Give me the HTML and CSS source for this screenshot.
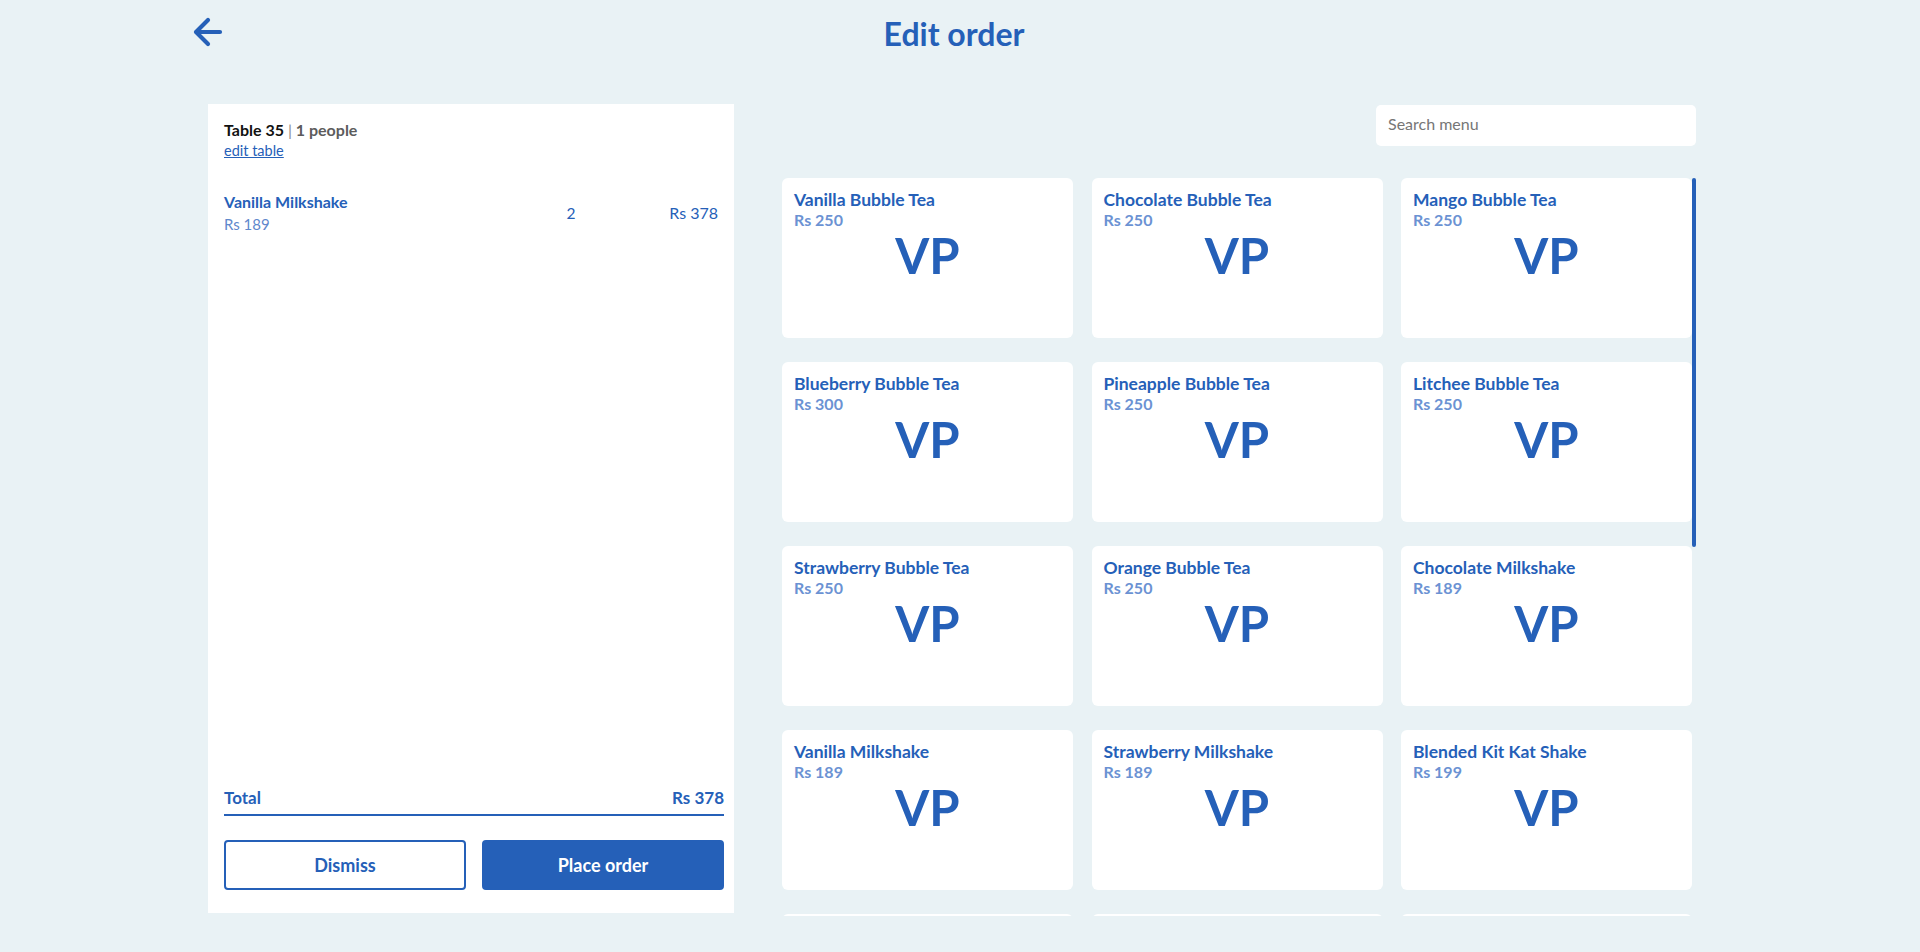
FILE: index.html
```html
<!DOCTYPE html>
<html lang="en">
<head>
<meta charset="utf-8">
<title>Edit order</title>
<link rel="stylesheet" href="styles.css">
</head>
<body>
<header class="topbar">
  <a class="back" href="#" aria-label="Back">
    <svg width="30" height="30" viewBox="0 0 30 30" fill="none" stroke="currentColor" stroke-width="4.2" stroke-linecap="round" stroke-linejoin="round">
      <path d="M27 15H3.5"/>
      <path d="M15 3L3 15l12 12"/>
    </svg>
  </a>
  <h1 class="title">Edit order</h1>
  <div class="spacer"></div>
</header>

<main class="main">
  <section class="order-panel">
    <div class="order-head">
      <div class="table-line"><span class="table-name">Table 35</span> <span class="sep">|</span> <span class="people">1 people</span></div>
      <a class="edit-link" href="#">edit table</a>
    </div>
    <div class="order-items">
      <div class="order-item">
        <div class="item-info">
          <div class="item-name">Vanilla Milkshake</div>
          <div class="item-unit">Rs 189</div>
        </div>
        <div class="item-qty">2</div>
        <div class="item-total">Rs 378</div>
      </div>
    </div>
    <div class="order-total">
      <span>Total</span>
      <span>Rs 378</span>
    </div>
    <div class="actions">
      <button class="btn btn-outline">Dismiss</button>
      <button class="btn btn-solid">Place order</button>
    </div>
  </section>

  <section class="menu">
    <input class="search" type="text" placeholder="Search menu">
    <div class="menu-body">
      <div class="menu-viewport">
        <div class="menu-grid">
          <div class="card"><div class="card-name">Vanilla Bubble Tea</div><div class="card-price">Rs 250</div><div class="card-logo">VP</div></div>
          <div class="card"><div class="card-name">Chocolate Bubble Tea</div><div class="card-price">Rs 250</div><div class="card-logo">VP</div></div>
          <div class="card"><div class="card-name">Mango Bubble Tea</div><div class="card-price">Rs 250</div><div class="card-logo">VP</div></div>
          <div class="card"><div class="card-name">Blueberry Bubble Tea</div><div class="card-price">Rs 300</div><div class="card-logo">VP</div></div>
          <div class="card"><div class="card-name">Pineapple Bubble Tea</div><div class="card-price">Rs 250</div><div class="card-logo">VP</div></div>
          <div class="card"><div class="card-name">Litchee Bubble Tea</div><div class="card-price">Rs 250</div><div class="card-logo">VP</div></div>
          <div class="card"><div class="card-name">Strawberry Bubble Tea</div><div class="card-price">Rs 250</div><div class="card-logo">VP</div></div>
          <div class="card"><div class="card-name">Orange Bubble Tea</div><div class="card-price">Rs 250</div><div class="card-logo">VP</div></div>
          <div class="card"><div class="card-name">Chocolate Milkshake</div><div class="card-price">Rs 189</div><div class="card-logo">VP</div></div>
          <div class="card"><div class="card-name">Vanilla Milkshake</div><div class="card-price">Rs 189</div><div class="card-logo">VP</div></div>
          <div class="card"><div class="card-name">Strawberry Milkshake</div><div class="card-price">Rs 189</div><div class="card-logo">VP</div></div>
          <div class="card"><div class="card-name">Blended Kit Kat Shake</div><div class="card-price">Rs 199</div><div class="card-logo">VP</div></div>
          <div class="card"><div class="card-name">Blended Oreo Shake</div><div class="card-price">Rs 199</div><div class="card-logo">VP</div></div>
          <div class="card"><div class="card-name">Cold Coffee</div><div class="card-price">Rs 149</div><div class="card-logo">VP</div></div>
          <div class="card"><div class="card-name">Iced Latte</div><div class="card-price">Rs 179</div><div class="card-logo">VP</div></div>
          <div class="card"><div class="card-name">Lemon Iced Tea</div><div class="card-price">Rs 129</div><div class="card-logo">VP</div></div>
          <div class="card"><div class="card-name">Peach Iced Tea</div><div class="card-price">Rs 129</div><div class="card-logo">VP</div></div>
          <div class="card"><div class="card-name">Virgin Mojito</div><div class="card-price">Rs 159</div><div class="card-logo">VP</div></div>
          <div class="card"><div class="card-name">Blue Lagoon</div><div class="card-price">Rs 159</div><div class="card-logo">VP</div></div>
          <div class="card"><div class="card-name">Watermelon Cooler</div><div class="card-price">Rs 149</div><div class="card-logo">VP</div></div>
          <div class="card"><div class="card-name">French Fries</div><div class="card-price">Rs 119</div><div class="card-logo">VP</div></div>
          <div class="card"><div class="card-name">Peri Peri Fries</div><div class="card-price">Rs 139</div><div class="card-logo">VP</div></div>
          <div class="card"><div class="card-name">Veg Sandwich</div><div class="card-price">Rs 149</div><div class="card-logo">VP</div></div>
          <div class="card"><div class="card-name">Paneer Sandwich</div><div class="card-price">Rs 179</div><div class="card-logo">VP</div></div>
        </div>
      </div>
      <div class="scrollbar"><div class="thumb"></div></div>
    </div>
  </section>
</main>
</body>
</html>
```

FILE: styles.css
```css
* {
  box-sizing: border-box;
}

html, body {
  margin: 0;
  padding: 0;
}

body {
  background: #e9f2f5;
  font-family: Lato, "Liberation Sans", sans-serif;
  color: #2560b8;
  height: 952px;
  overflow: hidden;
}

.topbar {
  display: grid;
  grid-template-columns: 1fr auto 1fr;
  align-items: start;
  width: 1522px;
  height: 104px;
  margin-left: 193px;
}

.back {
  display: block;
  width: 30px;
  height: 30px;
  margin-top: 17px;
  color: #2560b8;
}

.back svg {
  display: block;
}

.title {
  margin: 0;
  padding-top: 15px;
  font-size: 32px;
  line-height: 38px;
  font-weight: 700;
  color: #2560b8;
}

.main {
  display: flex;
  gap: 48px;
  padding-left: 208px;
}

.order-panel {
  display: flex;
  flex-direction: column;
  width: 526px;
  height: 809px;
  background: #ffffff;
  padding: 16px 10px 23px 16px;
}

.order-head {
  display: flex;
  flex-direction: column;
  align-items: flex-start;
}

.table-line {
  font-size: 16px;
  font-weight: 700;
  line-height: 19px;
}

.table-name {
  color: #111111;
}

.sep {
  color: #8a8a8a;
  font-weight: 400;
}

.people {
  color: #5c5c5c;
}

.edit-link {
  margin-top: 3px;
  font-size: 14.5px;
  line-height: 17px;
  color: #2560b8;
  text-decoration: underline;
}

.order-items {
  flex: 1;
  margin-top: 33px;
  padding-right: 6px;
}

.order-item {
  display: grid;
  grid-template-columns: 1fr 54px 120px;
  align-items: center;
}

.item-name {
  font-size: 16px;
  font-weight: 700;
  line-height: 20px;
  color: #2560b8;
}

.item-unit {
  margin-top: 3px;
  font-size: 15px;
  line-height: 18px;
  color: #5f88cc;
}

.item-qty {
  font-size: 15.5px;
  text-align: center;
  color: #2560b8;
}

.item-total {
  font-size: 16px;
  text-align: right;
  color: #2560b8;
}

.order-total {
  display: flex;
  justify-content: space-between;
  font-size: 17px;
  font-weight: 700;
  line-height: 20px;
  padding-bottom: 6px;
  border-bottom: 2px solid #2560b8;
  color: #2560b8;
}

.actions {
  display: grid;
  grid-template-columns: 1fr 1fr;
  gap: 16px;
  margin-top: 24px;
}

.btn {
  height: 50px;
  border-radius: 4px;
  font-family: Lato, "Liberation Sans", sans-serif;
  font-size: 18px;
  font-weight: 700;
  cursor: pointer;
}

.btn-outline {
  background: #ffffff;
  border: 2px solid #2560b8;
  color: #2560b8;
}

.btn-solid {
  background: #2560b8;
  border: 2px solid #2560b8;
  color: #ffffff;
}

.menu {
  display: flex;
  flex-direction: column;
  width: 914px;
}

.search {
  align-self: flex-end;
  width: 320px;
  height: 41px;
  margin-top: 1px;
  border: none;
  border-radius: 5px;
  background: #ffffff;
  padding: 0 12px 4px;
  font-family: Lato, "Liberation Sans", sans-serif;
  font-size: 16px;
  color: #333333;
  outline: none;
}

.search::placeholder {
  color: #767676;
}

.menu-body {
  display: flex;
  margin-top: 32px;
  height: 738px;
}

.menu-viewport {
  width: 910px;
  height: 100%;
  overflow: hidden;
}

.scrollbar {
  width: 4px;
  height: 100%;
}

.thumb {
  height: 369px;
  background: #2560b8;
  border-radius: 2px;
}

.menu-grid {
  display: grid;
  grid-template-columns: repeat(3, 1fr);
  column-gap: 18.5px;
  row-gap: 24px;
}

.card {
  height: 160px;
  background: #ffffff;
  border-radius: 6px;
  padding: 12px 12px 10px;
}

.card-name {
  font-size: 17.5px;
  line-height: 20px;
  font-weight: 700;
  color: #2560b8;
}

.card-price {
  font-size: 16px;
  line-height: 19px;
  font-weight: 700;
  color: #6b92d3;
}

.card-logo {
  margin-top: -1px;
  font-size: 49px;
  line-height: 54px;
  font-weight: 700;
  text-align: center;
  color: #2560b8;
}
```
